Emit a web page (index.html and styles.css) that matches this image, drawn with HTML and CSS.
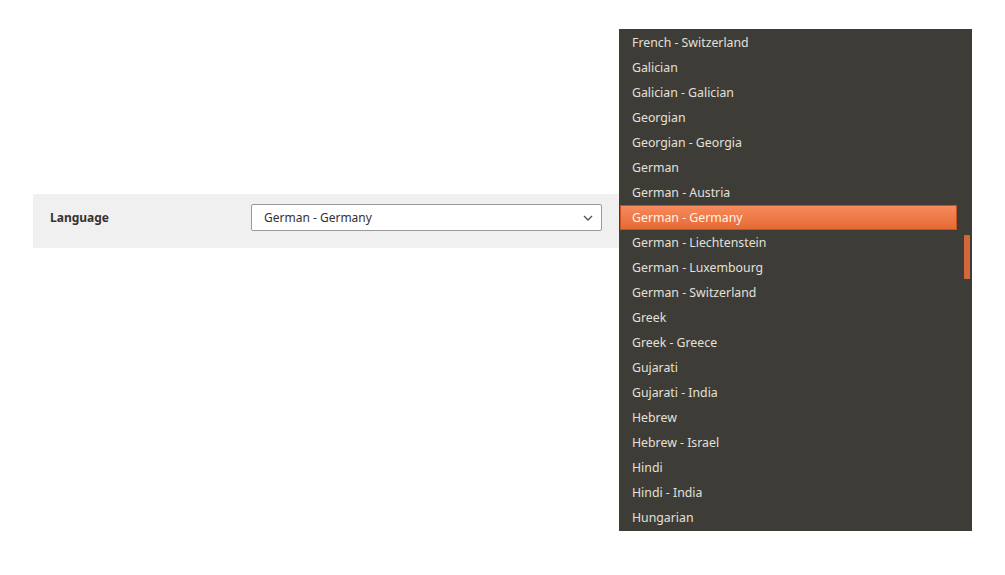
FILE: index.html
```html
<!DOCTYPE html>
<html>
<head>
<meta charset="utf-8">
<link rel="stylesheet" href="styles.css">
</head>
<body>
<div class="page">
  <div class="row">
    <div class="label">Language</div>
    <div class="select">
      <span class="value">German - Germany</span>
      <svg class="chev" width="10" height="6" viewBox="0 0 10 6"><path d="M1 1 L5 5 L9 1" fill="none" stroke="#555" stroke-width="1.4"/></svg>
    </div>
  </div>
</div>
<div class="menu">
  <ul class="list">
    <li>French - Switzerland</li>
    <li>Galician</li>
    <li>Galician - Galician</li>
    <li>Georgian</li>
    <li>Georgian - Georgia</li>
    <li>German</li>
    <li>German - Austria</li>
    <li class="sel">German - Germany</li>
    <li>German - Liechtenstein</li>
    <li>German - Luxembourg</li>
    <li>German - Switzerland</li>
    <li>Greek</li>
    <li>Greek - Greece</li>
    <li>Gujarati</li>
    <li>Gujarati - India</li>
    <li>Hebrew</li>
    <li>Hebrew - Israel</li>
    <li>Hindi</li>
    <li>Hindi - India</li>
    <li>Hungarian</li>
  </ul>
  <div class="scrollbar"><div class="thumb"></div></div>
</div>
</body>
</html>
```
FILE: styles.css
```css
html, body {
  margin: 0;
  padding: 0;
  background: #ffffff;
  font-family: "Noto Sans", "DejaVu Sans", sans-serif;
}
.page {
  padding: 194px 0 0 33px;
}
.row {
  width: 586px;
  height: 54px;
  background: #f0f0f0;
  display: flex;
  align-items: center;
  box-sizing: border-box;
  padding: 0 0 7px 17px;
}
.label {
  width: 201px;
  font-size: 12px;
  font-weight: bold;
  color: #333333;
}
.select {
  width: 351px;
  height: 27px;
  box-sizing: border-box;
  border: 1px solid #9a9a9a;
  border-radius: 2px;
  background: #ffffff;
  display: flex;
  align-items: center;
  justify-content: space-between;
  padding: 0 8px 0 12px;
  font-size: 12px;
  color: #333333;
}
.chev {
  display: block;
}
.menu {
  position: absolute;
  left: 619px;
  top: 29px;
  width: 353px;
  height: 502px;
  background: #3e3c37;
  display: flex;
  box-sizing: border-box;
  padding: 1px;
}
.list {
  list-style: none;
  margin: 0;
  padding: 0;
  width: 337px;
}
.list li {
  height: 25px;
  line-height: 25px;
  padding-left: 12px;
  font-size: 12.3px;
  color: #e3e0d9;
  box-sizing: border-box;
  white-space: nowrap;
}
.list li.sel {
  background: linear-gradient(#f68a5c, #e66a33);
  border: 1px solid #c4521f;
  line-height: 23px;
  padding-left: 11px;
  color: #fff3ea;
}
.scrollbar {
  flex: 1;
  display: flex;
  justify-content: flex-end;
  padding-right: 1px;
}
.thumb {
  width: 6px;
  height: 44px;
  margin-top: 205px;
  background: #d4673a;
  border-radius: 1px;
}
```
